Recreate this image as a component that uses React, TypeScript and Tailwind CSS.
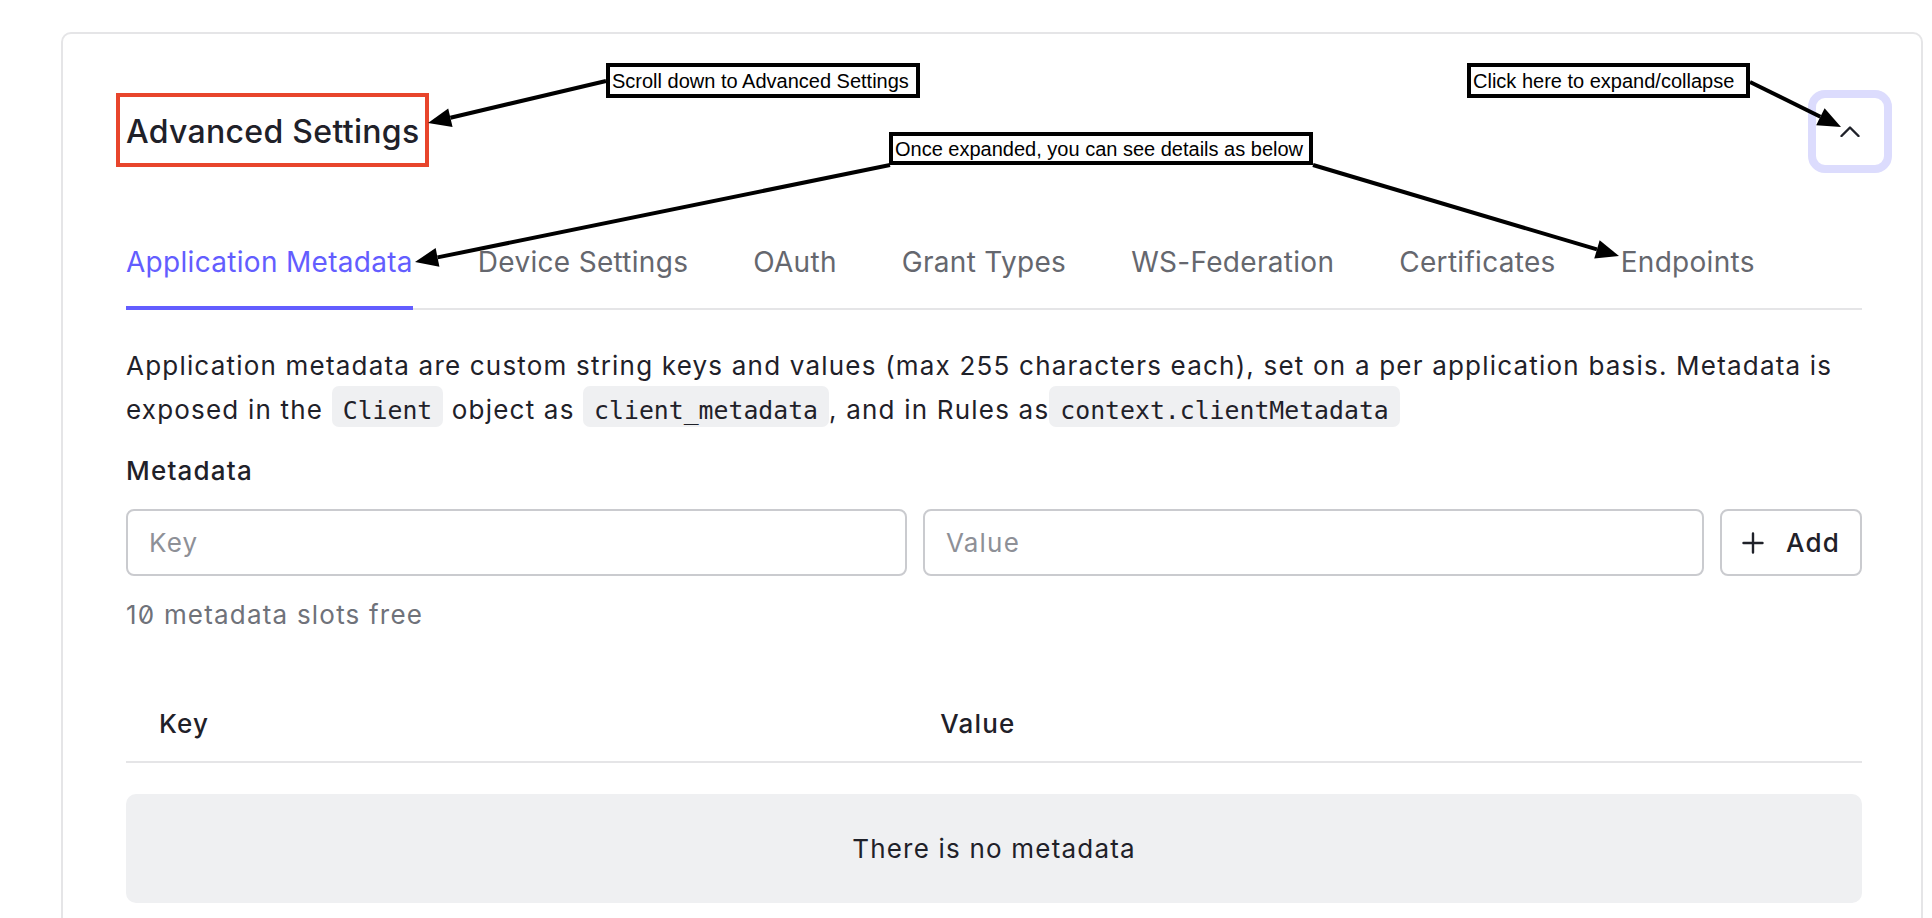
import { useState } from "react";

const tabs = [
  "Application Metadata",
  "Device Settings",
  "OAuth",
  "Grant Types",
  "WS-Federation",
  "Certificates",
  "Endpoints",
];

// annotation arrows, page coordinates
const arrows = [
  { x1: 606, y1: 81, x2: 428, y2: 123 },
  { x1: 890, y1: 165, x2: 415, y2: 262 },
  { x1: 1313, y1: 165, x2: 1619, y2: 256 },
  { x1: 1750, y1: 82, x2: 1841, y2: 127 },
];

function Arrow({ x1, y1, x2, y2 }: { x1: number; y1: number; x2: number; y2: number }) {
  const len = Math.hypot(x2 - x1, y2 - y1);
  const ux = (x2 - x1) / len;
  const uy = (y2 - y1) / len;
  const L = 23;
  const W = 19;
  const bx = x2 - ux * L;
  const by = y2 - uy * L;
  const nx = -uy;
  const ny = ux;
  const pts = `${x2},${y2} ${bx + (nx * W) / 2},${by + (ny * W) / 2} ${bx - (nx * W) / 2},${by - (ny * W) / 2}`;
  return (
    <g>
      <line x1={x1} y1={y1} x2={bx} y2={by} stroke="#000" strokeWidth={4} />
      <polygon points={pts} fill="#000" />
    </g>
  );
}

function Code({ children }: { children: React.ReactNode }) {
  return (
    <code className="rounded-[7px] bg-[#eff0f2] px-[11px] pt-[10px] pb-[2px] font-['DejaVu_Sans_Mono',monospace] text-[24.8px] tracking-normal text-[#1f2129]">
      {children}
    </code>
  );
}

export default function App() {
  const [active, setActive] = useState(0);
  const [open, setOpen] = useState(true);

  return (
    <div className="relative h-[918px] overflow-hidden bg-white font-['Inter',sans-serif] tracking-[1.2px] text-[#1f2129]">
      <div className="pl-[61px] pr-[9px] pt-[32px]">
        <section className="min-h-[1000px] rounded-[10px] border-2 border-[#e5e5e7] pl-[63px] pr-[59px] pt-[56px]">
          <div className="mr-[-30px] flex h-[83px] items-center justify-between">
            <h2 className="text-[32px] font-medium leading-[40px] tracking-[0.3px]">Advanced Settings</h2>
            <button
              onClick={() => setOpen(!open)}
              className="flex h-[83px] w-[84px] items-center justify-center rounded-[17px] border-[8px] border-[#dcdcfd] bg-white"
            >
              <svg width="20" height="11" viewBox="0 0 20 11" fill="none">
                <polyline points="1.5,10 10,1.5 18.5,10" stroke="#1f2129" strokeWidth="2.4" strokeLinecap="round" strokeLinejoin="round" />
              </svg>
            </button>
          </div>

          {open ? (
            <>
              <div className="mt-[72px] flex gap-[65px] border-b-2 border-[#e5e5e7]">
                {tabs.map((t, i) => (
                  <button
                    key={t}
                    onClick={() => setActive(i)}
                    className={
                      i === active
                        ? "-mb-[2px] border-b-4 border-[#635dff] pb-[27px] text-[28px] leading-[34px] tracking-[0.3px] text-[#635dff]"
                        : "-mb-[2px] border-b-4 border-transparent pb-[27px] text-[28px] leading-[34px] tracking-[0.3px] text-[#65676e]"
                    }
                  >
                    {t}
                  </button>
                ))}
              </div>

              <p className="mt-[34px] text-[26px] leading-[44px]">
                Application metadata are custom string keys and values (max 255 characters each), set on a per application basis. Metadata is exposed in the <Code>Client</Code> object as <Code>client_metadata</Code>, and in Rules as<Code>context.clientMetadata</Code>
              </p>

              <div className="mt-[20px] text-[26px] font-medium leading-[36px]">Metadata</div>

              <div className="mt-[20px] flex gap-[16px]">
                <input
                  placeholder="Key"
                  className="h-[67px] min-w-0 flex-1 rounded-[8px] border-2 border-[#cacbcf] px-[21px] text-[26px] outline-none placeholder:text-[#8e9097]"
                />
                <input
                  placeholder="Value"
                  className="h-[67px] min-w-0 flex-1 rounded-[8px] border-2 border-[#cacbcf] px-[21px] text-[26px] outline-none placeholder:text-[#8e9097]"
                />
                <button className="flex h-[67px] w-[142px] items-center justify-center gap-[22px] rounded-[8px] border-2 border-[#cacbcf] bg-white text-[26px] font-medium">
                  <svg width="22" height="22" viewBox="0 0 22 22" fill="none">
                    <path d="M11 1.5v19M1.5 11h19" stroke="#1f2129" strokeWidth="2.4" strokeLinecap="round" />
                  </svg>
                  <span>Add</span>
                </button>
              </div>

              <div className="mt-[21px] text-[26px] leading-[36px] text-[#6f727a] [font-feature-settings:'zero']">
                10 metadata slots free
              </div>

              <div className="mt-[73px] flex border-b-2 border-[#e5e5e7] pb-[19px] text-[26px] font-medium leading-[36px]">
                <div className="w-[45%] pl-[33px]">Key</div>
                <div className="flex-1 pl-[33px]">Value</div>
              </div>

              <div className="mt-[31px] flex h-[109px] items-center justify-center rounded-[10px] bg-[#eff0f2] text-[26px]">
                There is no metadata
              </div>
            </>
          ) : null}
        </section>
      </div>

      {/* annotations over the screenshot */}
      <div className="pointer-events-none absolute left-[116px] top-[93px] h-[74px] w-[313px] border-4 border-[#e8452c]" />
      <div className="absolute left-[606px] top-[63px] flex h-[35px] w-[314px] items-center border-4 border-black bg-white pl-[2px] font-['Liberation_Sans',Arial,sans-serif] text-[20px] leading-none tracking-normal text-black">
        Scroll down to Advanced Settings
      </div>
      <div className="absolute left-[889px] top-[132px] flex h-[33px] w-[424px] items-center border-4 border-black bg-white pl-[2px] font-['Liberation_Sans',Arial,sans-serif] text-[20px] leading-none tracking-normal text-black">
        Once expanded, you can see details as below
      </div>
      <div className="absolute left-[1467px] top-[63px] flex h-[35px] w-[283px] items-center border-4 border-black bg-white pl-[2px] font-['Liberation_Sans',Arial,sans-serif] text-[20px] leading-none tracking-normal text-black">
        Click here to expand/collapse
      </div>
      <svg className="pointer-events-none absolute left-0 top-0" width="1932" height="918">
        {arrows.map((a, i) => (
          <Arrow key={i} {...a} />
        ))}
      </svg>
    </div>
  );
}
